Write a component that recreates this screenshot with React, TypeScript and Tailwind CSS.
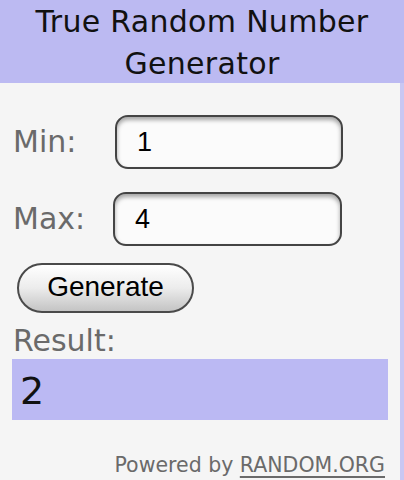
import React from "react";

export default function App() {
  return (
    <div className="w-[404px] h-[480px] flex flex-col bg-[#f5f5f5] overflow-hidden" style={{ fontFamily: '"DejaVu Sans", sans-serif' }}>
      <div className="h-[83px] shrink-0 bg-[#bcbaf2] text-center text-[30px] tracking-[0.3px] leading-[42px] text-[#111] pt-[1px]">
        <div>True Random Number</div>
        <div>Generator</div>
      </div>
      <div className="flex-1 flex flex-col border-r-[4px] border-[#c9c7f3]">
        <div className="flex items-center mt-[32px]">
          <div className="ml-[13px] w-[102px] text-[30px] leading-[30px] text-[#6a6a6a]">Min:</div>
          <div className="w-[228px] h-[54px] rounded-[13px] border-2 border-[#444] bg-[#fbfbfb] shadow-[inset_0_3px_4px_rgba(0,0,0,0.35)] flex items-center pl-[20px] text-[27px] text-black" style={{ fontFamily: '"Liberation Sans", Arial, sans-serif' }}>1</div>
        </div>
        <div className="flex items-center mt-[23px]">
          <div className="ml-[13px] w-[100px] text-[30px] leading-[30px] text-[#6a6a6a]">Max:</div>
          <div className="w-[229px] h-[54px] rounded-[13px] border-2 border-[#444] bg-[#fbfbfb] shadow-[inset_0_3px_4px_rgba(0,0,0,0.35)] flex items-center pl-[20px] text-[27px] text-black" style={{ fontFamily: '"Liberation Sans", Arial, sans-serif' }}>4</div>
        </div>
        <div className="mt-[17px] ml-[17px]">
          <div className="w-[177px] h-[50px] rounded-full border-2 border-[#4a4a4a] bg-gradient-to-b from-white via-[#ececec] to-[#c4c4c4] flex items-center justify-center text-[28px] text-black pb-[2px]" style={{ fontFamily: '"Liberation Sans", Arial, sans-serif' }}>Generate</div>
        </div>
        <div className="mt-[13px] ml-[13px] text-[30px] leading-[30px] text-[#6a6a6a]">Result:</div>
        <div className="mt-[3px] ml-[12px] w-[376px] h-[61px] bg-[#bbb9f3] pl-[8px] pt-[2px] text-[38px] leading-[61px] text-[#111]">2</div>
        <div className="mt-[33px] pr-[15px] flex justify-end text-[20.5px] leading-[24px] text-[#6a6a6a]">
          <span>Powered by&nbsp;<span className="underline underline-offset-[4px]">RANDOM.ORG</span></span>
        </div>
      </div>
    </div>
  );
}
